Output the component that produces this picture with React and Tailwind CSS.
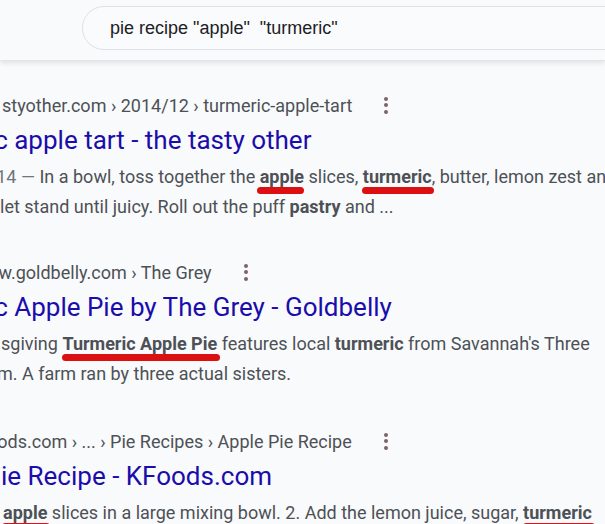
import React from 'react';

function Kebab() {
  return (
    <div className="ml-[32px] flex flex-col gap-[2.5px]">
      <span className="block w-[4px] h-[4px] rounded-full bg-[#7d6266]" />
      <span className="block w-[4px] h-[4px] rounded-full bg-[#7d6266]" />
      <span className="block w-[4px] h-[4px] rounded-full bg-[#7d6266]" />
    </div>
  );
}

function Mark({ children, bar }) {
  return (
    <span className="relative font-bold">
      {children}
      <span className={`absolute top-full h-[7px] rounded-full bg-[#dc1010] ${bar}`} />
    </span>
  );
}

function Result({ crumb, title, lines, gap }) {
  return (
    <div className={gap}>
      <div className="flex items-center h-[30px] text-[18px] text-[#4d5156] whitespace-nowrap">
        {crumb}
        <Kebab />
      </div>
      <div className="h-[40px] leading-[40px] text-[26px] text-[#1a0dab] whitespace-nowrap">{title}</div>
      <div className="mt-[2px] text-[18px] leading-[30px] text-[#4d5156]">
        {lines.map((l, i) => (
          <div key={i} className="whitespace-nowrap">{l}</div>
        ))}
      </div>
    </div>
  );
}

export default function App() {
  return (
    <div className="w-[605px] h-[524px] overflow-hidden bg-[#f9fafc] font-['Roboto',sans-serif]">
      <div className="h-[61px] pt-[6px] pl-[82px] border-b border-[#e4e5e8] shadow-[0_2px_5px_rgba(0,0,0,0.10)] relative z-10 bg-[#f9fafc]">
        <div className="w-[600px] h-[44px] rounded-full border border-[#dfe1e5] bg-[#fafbfd] flex items-center pl-[27px] font-['Liberation_Sans',Arial,sans-serif] text-[18px] text-[#202124] whitespace-pre">
          pie recipe "apple"  "turmeric"
        </div>
      </div>

      <Result
        gap="mt-[29px]"
        crumb={<span className="ml-[2px]">styother.com › 2014/12 › turmeric-apple-tart</span>}
        title={<span className="-ml-[95px] block">Turmeric apple tart - the tasty other</span>}
        lines={[
          <span className="-ml-[24px] inline-block">
            <span className="text-[#70757a]">2014 — </span>In a bowl, toss together the{' '}
            <Mark bar="-left-[3px] right-0">apple</Mark> slices,{' '}
            <Mark bar="-left-[1px] -right-[2px]">turmeric</Mark>, butter, lemon zest and
          </span>,
          <span>let stand until juicy. Roll out the puff <b>pastry</b> and ...</span>,
        ]}
      />

      <Result
        gap="mt-[35px]"
        crumb={<span className="-ml-[15px]">ww.goldbelly.com › The Grey</span>}
        title={<span className="-ml-[95px] block">Turmeric Apple Pie by The Grey - Goldbelly</span>}
        lines={[
          <span className="ml-[1px] inline-block">
            sgiving <Mark bar="left-0 -right-[3px]">Turmeric Apple Pie</Mark> features local <b>turmeric</b> from Savannah's Three
          </span>,
          <span className="-ml-[3px] inline-block">m. A farm ran by three actual sisters.</span>,
        ]}
      />

      <Result
        gap="mt-[37px]"
        crumb={<span className="-ml-[13px]">oods.com › ... › Pie Recipes › Apple Pie Recipe</span>}
        title={<span className="ml-[1px] block">ie Recipe - KFoods.com</span>}
        lines={[
          <span className="ml-[3px] inline-block">
            <Mark bar="-left-[1px] -right-[3px]">apple</Mark> slices in a large mixing bowl. 2. Add the lemon juice, sugar,{' '}
            <Mark bar="left-0 -right-[3px]">turmeric</Mark>
          </span>,
        ]}
      />
    </div>
  );
}
